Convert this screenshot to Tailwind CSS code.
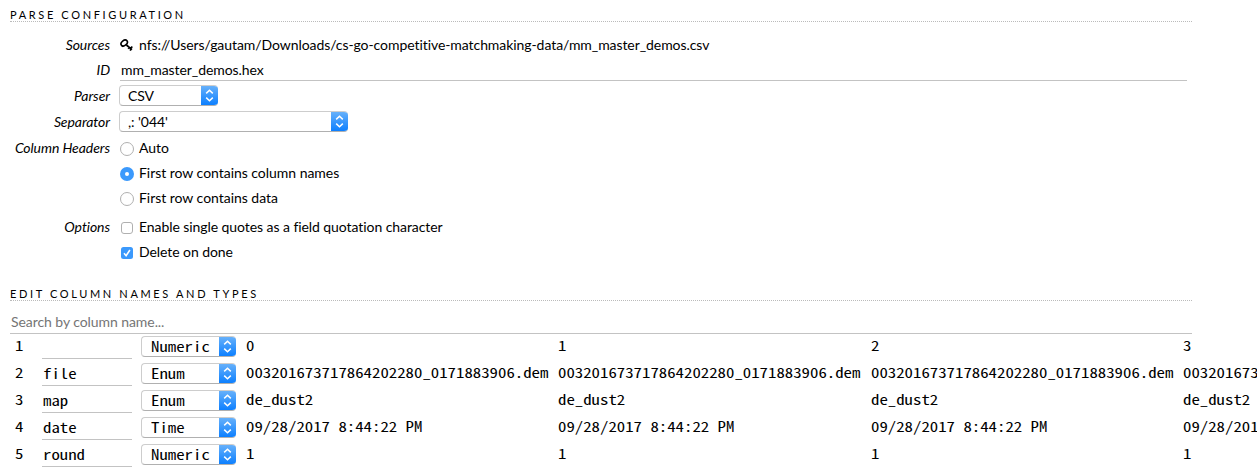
<!DOCTYPE html>
<html lang="en">
<head>
<meta charset="utf-8">
<title>Parse Configuration</title>
<script src="https://cdn.jsdelivr.net/npm/@tailwindcss/browser@4"></script>
</head>
<body class="h-[470px] w-[1257px] overflow-hidden bg-white font-['Lato',sans-serif] text-[14px] leading-[20px] tracking-[-0.07px] text-black">
<main class="h-[470px] overflow-hidden pl-[10px] pt-[8px]">
  <h2 class="h-[14px] w-[1182px] border-b border-dotted border-[#bbb] text-[11px] leading-[14px] tracking-[2.64px]">PARSE CONFIGURATION</h2>

  <section class="mt-[13px] grid grid-cols-[100px_1fr] gap-x-[9px]">
    <div class="h-[25px] text-right italic leading-[20px]">Sources</div>
    <div class="flex h-[25px] items-start leading-[20px]">
      <svg class="mt-[4px] ml-px mr-[6px] h-[13px] w-[13px] shrink-0" viewBox="0 0 13 13" fill="none" stroke="#000"><ellipse cx="4.2" cy="4" rx="2.5" ry="3.5" transform="rotate(52 4.2 4)" stroke-width="1.6"/><path d="M2 6.6L3.4 7.6M6.4 6L12 10.6M9.2 8.4L8.2 9.8M11 9.8L10.2 11.6M10.4 9.2L12.4 7.6" stroke-width="1.7"/></svg>
      <span>nfs://Users/gautam/Downloads/cs-go-competitive-matchmaking-data/mm_master_demos.csv</span>
    </div>

    <div class="h-[25px] text-right italic leading-[19px]">ID</div>
    <div class="h-[25px]"><div class="ml-px h-[21px] w-[1067px] border-b border-[#c3c3c3] pl-px leading-[20px]">mm_master_demos.hex</div></div>

    <div class="h-[26px] text-right italic leading-[22px]">Parser</div>
    <div class="h-[26px]"><div class="flex h-[21px] w-[99px] overflow-hidden rounded-[4px] border border-[#cdcdcd] border-r-0 border-b-[#b0b0b0]"><span class="flex-1 pl-[8px] leading-[20px]">CSV</span><svg class="-my-px h-[21px] w-[17px] shrink-0" viewBox="0 0 17 21"><use href="#stepper"/></svg></div></div>

    <div class="h-[28px] text-right italic leading-[22px]">Separator</div>
    <div class="h-[28px]"><div class="flex h-[21px] w-[229px] overflow-hidden rounded-[4px] border border-[#cdcdcd] border-r-0 border-b-[#b0b0b0]"><span class="flex-1 pl-[8px] leading-[20px]">,: '044'</span><svg class="-my-px h-[21px] w-[17px] shrink-0" viewBox="0 0 17 21"><use href="#stepper"/></svg></div></div>

    <div class="text-right italic leading-[18px]">Column Headers</div>
    <div class="tracking-[-0.03px]">
      <div class="flex h-[25px] items-start gap-[5px] pl-px leading-[18px]"><i class="mt-[3px] h-[14px] w-[14px] rounded-full border border-[#b0b0b0]"></i>Auto</div>
      <div class="flex h-[25px] items-start gap-[5px] pl-px leading-[18px]"><i class="mt-[3px] flex h-[14px] w-[14px] items-center justify-center rounded-full bg-[#3b99fc]"><b class="h-[4px] w-[4px] rounded-full bg-white"></b></i>First row contains column names</div>
      <div class="flex h-[29px] items-start gap-[5px] pl-px leading-[18px]"><i class="mt-[3px] h-[14px] w-[14px] rounded-full border border-[#b0b0b0]"></i>First row contains data</div>
    </div>

    <div class="text-right italic leading-[18px]">Options</div>
    <div>
      <div class="flex h-[25px] items-start gap-[6px] pl-[2px] leading-[18px]"><i class="mt-[4px] h-[12px] w-[12px] rounded-[3px] border border-[#b0b0b0]"></i>Enable single quotes as a field quotation character</div>
      <div class="flex h-[25px] items-start gap-[6px] pl-[2px] leading-[18px]"><svg class="mt-[4px] h-[12px] w-[12px]" viewBox="0 0 12 12"><rect width="12" height="12" rx="2.5" fill="#3b99fc"/><path d="M3 6.3L5.1 8.7L8.9 3" fill="none" stroke="#fff" stroke-width="1.6"/></svg>Delete on done</div>
    </div>
  </section>

  <h2 class="mt-[19px] h-[14px] w-[1182px] border-b border-dotted border-[#bbb] text-[11px] leading-[14px] tracking-[2.64px]">EDIT COLUMN NAMES AND TYPES</h2>
  <div class="mt-[11px] h-[22px] w-[1182px] border-b border-[#c3c3c3] pl-px leading-[20px] text-[#757575]">Search by column name...</div>
  <section id="rows" class="pt-[2px] font-['Noto_Sans_Mono_CJK_SC','Liberation_Mono',monospace] text-[14px] tracking-normal"></section>
</main>

<svg class="absolute h-0 w-0">
  <defs>
    <linearGradient id="blue" x1="0" y1="0" x2="0" y2="1"><stop offset="0" stop-color="#6bb3fa"/><stop offset="1" stop-color="#087dff"/></linearGradient>
    <g id="stepper"><rect width="17" height="21" fill="url(#blue)"/><path d="M5.2 8.4L8.5 5.3L11.8 8.4M5.2 12.6L8.5 15.7L11.8 12.6" fill="none" stroke="#fff" stroke-width="1.5"/></g>
  </defs>
</svg>

<script>
const dem = '003201673717864202280_0171883906.dem';
const date = '09/28/2017 8:44:22 PM';
const data = [
  ['', 'Numeric', ['0', '1', '2', '3']],
  ['file', 'Enum', [dem, dem, dem, dem]],
  ['map', 'Enum', ['de_dust2', 'de_dust2', 'de_dust2', 'de_dust2']],
  ['date', 'Time', [date, date, date, date]],
  ['round', 'Numeric', ['1', '1', '1', '1']]
];
const wide = t => `<span class="inline-block origin-left scale-x-[1.2]">${t}</span>`;
document.getElementById('rows').innerHTML = data.map(([name, type, values], i) => `
  <div class="flex h-[27px] items-start whitespace-nowrap leading-[18px]">
    <span class="w-[32px] shrink-0 pl-[5px]">${wide(i + 1)}</span>
    <span class="mr-[9px] h-[23px] w-[90px] shrink-0 border-b border-[#c3c3c3] pl-px leading-[20px]">${wide(name)}</span>
    <div class="mr-[10px] flex h-[21px] w-[95px] shrink-0 overflow-hidden rounded-[4px] border border-r-0 border-[#cdcdcd] border-b-[#b0b0b0]"><span class="h-[19px] flex-1 pl-[9px] leading-[19px]">${wide(type)}</span><svg class="-my-px h-[21px] w-[17px] shrink-0" viewBox="0 0 17 21"><use href="#stepper"/></svg></div>
    ${values.map(v => `<span class="w-[312.4px] shrink-0">${wide(v)}</span>`).join('')}
  </div>`).join('');
</script>
</body>
</html>
